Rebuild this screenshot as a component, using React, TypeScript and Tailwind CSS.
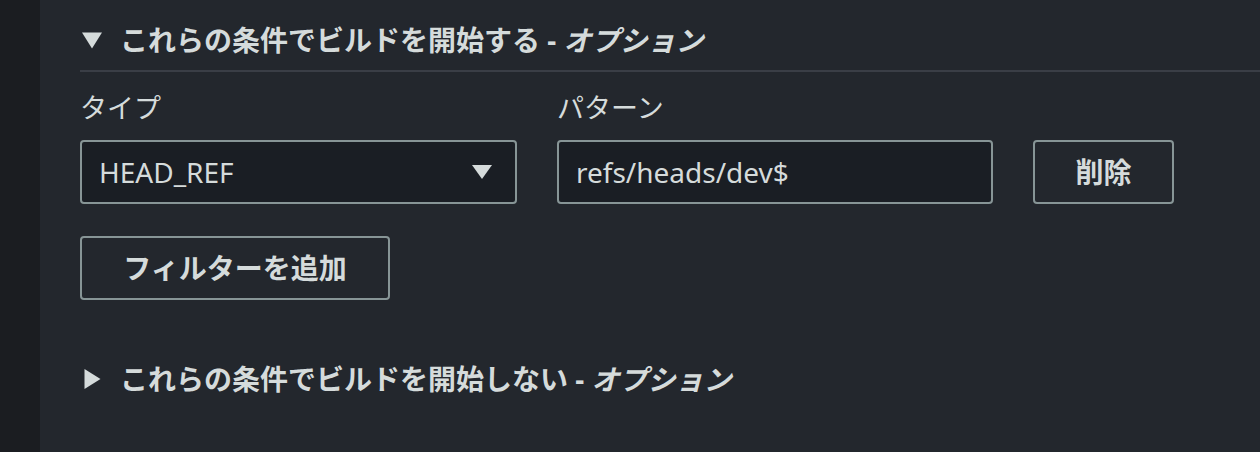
const FONT = { fontFamily: '"Noto Sans", "Noto Sans CJK JP", sans-serif' };

function Caret({ open }: { open: boolean }) {
  return open ? (
    <svg width="20" height="17" viewBox="0 0 20 17" className="shrink-0">
      <path d="M0 0.5 H20 L10 16.5 Z" fill="#d5dbdb" />
    </svg>
  ) : (
    <svg width="17" height="20" viewBox="0 0 17 20" className="shrink-0">
      <path d="M0.5 0 V20 L16.5 10 Z" fill="#d5dbdb" />
    </svg>
  );
}

function SectionHeader({ open, title }: { open: boolean; title: string }) {
  return (
    <div className="flex items-center gap-[16px] text-[28px] leading-[40px] font-bold text-[#d5dbdb]">
      <div className="flex w-[24px] justify-center">
        <Caret open={open} />
      </div>
      <span>
        {title} - <i>オプション</i>
      </span>
    </div>
  );
}

export default function App() {
  return (
    <div className="flex h-[452px] w-[1260px] overflow-hidden bg-[#23272d]" style={FONT}>
      <div className="w-[40px] shrink-0 bg-[#1b1d21]" />
      <div className="flex-1 pl-[40px]">
        <div className="flex h-[72px] items-center border-b-2 border-[#3a3e46] pt-[10px]">
          <SectionHeader open title="これらの条件でビルドを開始する" />
        </div>

        <div className="mt-[18px] flex items-end gap-[40px]">
          <div className="flex flex-col">
            <label className="text-[27px] leading-[36px] text-[#d5dbdb]">タイプ</label>
            <div className="mt-[14px] flex h-[64px] w-[437px] items-center justify-between rounded-[4px] border-2 border-[#879596] bg-[#1a1e24] pl-[17px] pr-[22px] text-[28px] text-[#d5dbdb]">
              <span>HEAD_REF</span>
              <svg width="22" height="16" viewBox="0 0 22 16">
                <path d="M1 1 H21 L11 15 Z" fill="#d5dbdb" />
              </svg>
            </div>
          </div>
          <div className="flex flex-col">
            <label className="text-[27px] leading-[36px] text-[#d5dbdb]">パターン</label>
            <div className="mt-[14px] flex h-[64px] w-[436px] items-center rounded-[4px] border-2 border-[#879596] bg-[#1a1e24] pl-[17px] text-[28px] text-[#d5dbdb]">
              refs/heads/dev$
            </div>
          </div>
          <button className="flex h-[64px] w-[141px] items-center justify-center rounded-[4px] border-2 border-[#879596] text-[28px] font-bold text-[#d5dbdb]">
            削除
          </button>
        </div>

        <button className="mt-[32px] flex h-[64px] w-[310px] items-center justify-center rounded-[4px] border-2 border-[#879596] text-[28px] font-bold text-[#d5dbdb]">
          フィルターを追加
        </button>

        <div className="mt-[59px]">
          <SectionHeader open={false} title="これらの条件でビルドを開始しない" />
        </div>
      </div>
    </div>
  );
}
